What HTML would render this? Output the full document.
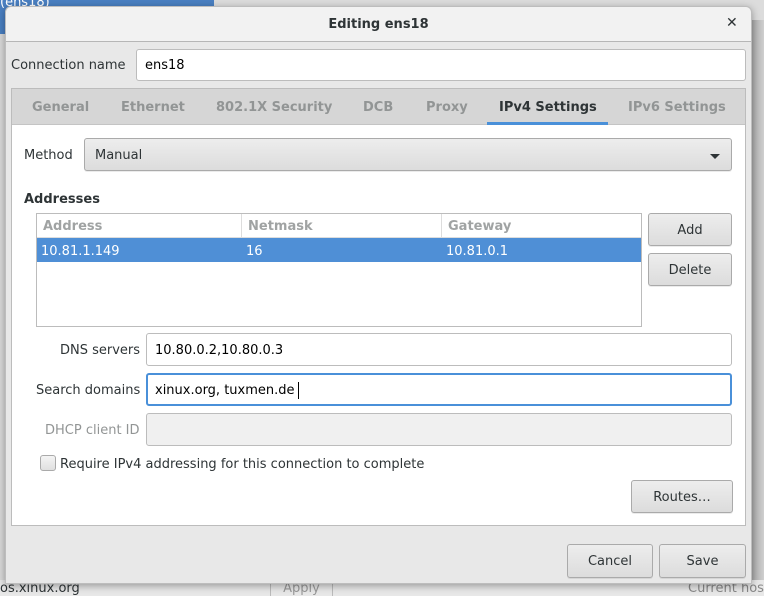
<!DOCTYPE html>
<html><head><style>
*{box-sizing:border-box;margin:0;padding:0}
body{width:764px;height:596px;overflow:hidden;background:#d9d9d9;font-family:"DejaVu Sans","Liberation Sans",sans-serif;font-size:13px;color:#2e3436;position:relative;white-space:nowrap}
.a{position:absolute}
.in{position:absolute;background:#fff;border:1px solid #bcbcbc;border-radius:3px;padding-left:8px;display:flex;align-items:center;color:#000}
.btn{position:absolute;border:1px solid #aaa;border-radius:3px;background:linear-gradient(#ededed,#dcdcdc);display:flex;align-items:center;justify-content:center;color:#2e3436;box-shadow:0 1px 0 rgba(0,0,0,.08)}
.lab{position:absolute;text-align:right;white-space:nowrap}
.tab{position:absolute;top:100px;font-weight:bold;color:#929595;white-space:nowrap}
</style></head><body>
<div class="a" style="left:0;top:0;width:214px;height:34px;background:#4a7fc1"></div>
<div class="a" style="left:0;top:-5px;color:#fff;font-size:13px">(ens18)</div>
<div class="a" style="left:214px;top:0;width:550px;height:20px;background:#dcdcdc"></div>
<div class="a" style="left:752px;top:20px;width:12px;height:560px;background:linear-gradient(90deg,#aaa,#cfcfcf)"></div>
<div class="a" style="left:0;top:580px;width:764px;height:16px;background:#e8e8e8"></div>
<div class="a" style="left:0;top:581px;color:#2e3436;font-size:13px">os.xinux.org</div>
<div class="a" style="left:270px;top:580px;width:63px;height:16px;border-left:1px solid #bbb;border-right:1px solid #bbb;color:#999;text-align:center;font-size:13px;padding-top:1px">Apply</div>
<div class="a" style="left:688px;top:581px;color:#888;font-size:13px">Current host</div>

<div class="a" style="left:5px;top:6px;width:747px;height:578px;background:#e8e8e8;border:1px solid #bdbdbd;border-radius:6px 6px 0 0;box-shadow:0 2px 8px rgba(0,0,0,.35)"></div>
<div class="a" style="left:6px;top:7px;width:745px;height:35px;background:#f2f2f2;border-bottom:1px solid #b6b6b6;border-radius:6px 6px 0 0"></div>
<div class="a" style="left:6px;top:17px;width:745px;text-align:center;font-weight:bold;color:#2e3436">Editing ens18</div>
<div class="a" style="left:726px;top:15px;font-weight:bold;font-size:14px">✕</div>

<div class="lab" style="left:11px;top:58px">Connection name</div>
<div class="in" style="left:136px;top:49px;width:610px;height:32px">ens18</div>

<div class="a" style="left:11px;top:88px;width:735px;height:438px;background:#fff;border:1px solid #bcbcbc"></div>
<div class="a" style="left:12px;top:89px;width:733px;height:36px;background:#d6d6d6;border-bottom:1px solid #c4c4c4"></div>
<div class="tab" style="left:32px">General</div>
<div class="tab" style="left:121px">Ethernet</div>
<div class="tab" style="left:216px">802.1X Security</div>
<div class="tab" style="left:363px">DCB</div>
<div class="tab" style="left:426px">Proxy</div>
<div class="tab" style="left:499px;color:#2e3436">IPv4 Settings</div>
<div class="tab" style="left:628px">IPv6 Settings</div>
<div class="a" style="left:487px;top:122px;width:121px;height:3px;background:#4a90d9"></div>

<div class="lab" style="left:24px;top:148px">Method</div>
<div class="btn" style="left:84px;top:138px;width:648px;height:33px;justify-content:flex-start;padding-left:10px;padding-top:1px">Manual</div>
<div class="a" style="left:710px;top:154px;width:0;height:0;border-left:5px solid transparent;border-right:5px solid transparent;border-top:5px solid #2e3436"></div>

<div class="a" style="left:24px;top:192px;font-weight:bold">Addresses</div>
<div class="a" style="left:36px;top:213px;width:606px;height:114px;border:1px solid #bcbcbc;background:#fff"></div>
<div class="a" style="left:37px;top:214px;width:604px;height:24px;border-bottom:1px solid #ddd"></div>
<div class="a" style="left:241px;top:214px;width:1px;height:24px;background:#ddd"></div>
<div class="a" style="left:441px;top:214px;width:1px;height:24px;background:#ddd"></div>
<div class="a" style="left:43px;top:219px;font-weight:bold;color:#a0a3a3">Address</div>
<div class="a" style="left:248px;top:219px;font-weight:bold;color:#a0a3a3">Netmask</div>
<div class="a" style="left:448px;top:219px;font-weight:bold;color:#a0a3a3">Gateway</div>
<div class="a" style="left:37px;top:238px;width:604px;height:24px;background:#4f8fd6"></div>
<div class="a" style="left:41px;top:244px;color:#fff">10.81.1.149</div>
<div class="a" style="left:246px;top:244px;color:#fff">16</div>
<div class="a" style="left:446px;top:244px;color:#fff">10.81.0.1</div>

<div class="btn" style="left:648px;top:213px;width:84px;height:33px;padding-top:1px">Add</div>
<div class="btn" style="left:648px;top:253px;width:84px;height:33px;padding-top:1px">Delete</div>

<div class="lab" style="left:60px;top:343px">DNS servers</div>
<div class="in" style="left:146px;top:333px;width:586px;height:33px;padding-top:1px">10.80.0.2,10.80.0.3</div>
<div class="lab" style="left:36px;top:383px">Search domains</div>
<div class="in" style="left:146px;top:373px;width:586px;height:33px;border:2px solid #4a90d9;padding-left:7px;padding-top:1px">xinux.org, tuxmen.de <span style="display:inline-block;width:1px;height:17px;background:#000;margin-left:3px"></span></div>
<div class="lab" style="left:45px;top:423px;color:#929595">DHCP client ID</div>
<div class="in" style="left:146px;top:413px;width:586px;height:33px;background:#f0f0f0"></div>

<div class="a" style="left:40px;top:455px;width:16px;height:16px;border:1px solid #aaa;border-radius:3px;background:linear-gradient(#f4f4f4,#e0e0e0)"></div>
<div class="a" style="left:60px;top:457px">Require IPv4 addressing for this connection to complete</div>

<div class="btn" style="left:631px;top:480px;width:102px;height:33px;padding-top:1px">Routes…</div>

<div class="btn" style="left:567px;top:544px;width:86px;height:34px;padding-top:1px">Cancel</div>
<div class="btn" style="left:659px;top:544px;width:87px;height:34px;padding-top:1px">Save</div>
</body></html>
